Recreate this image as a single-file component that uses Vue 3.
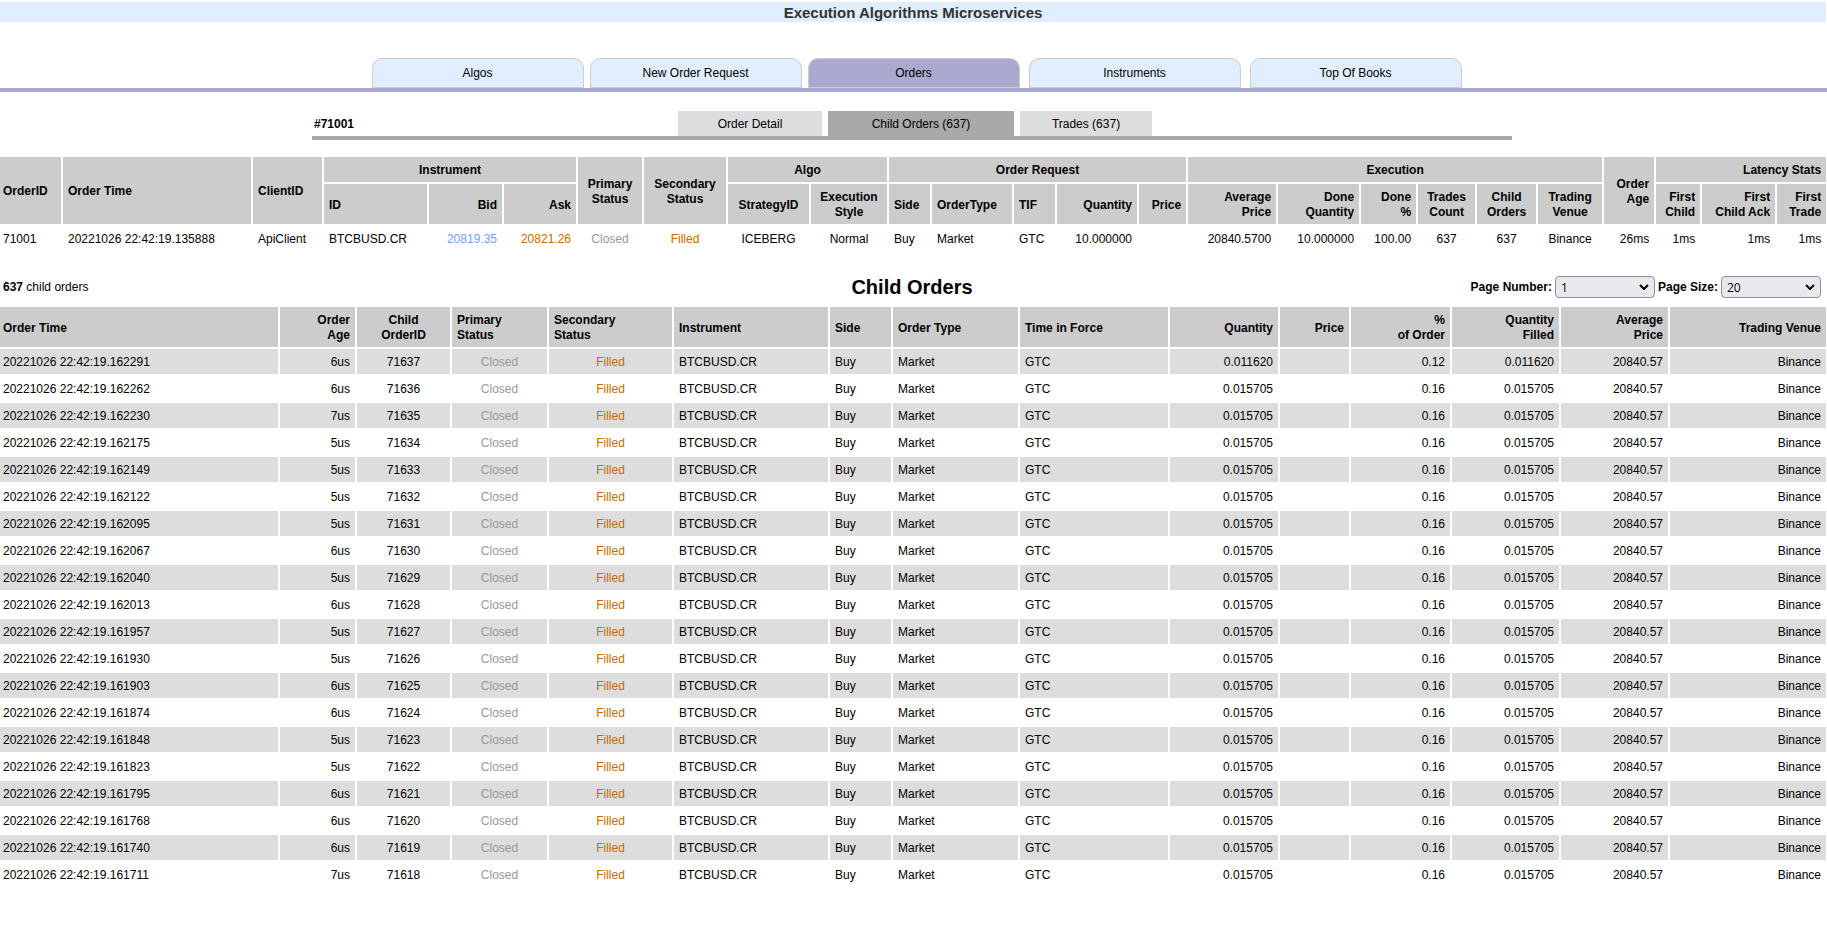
<script setup>
import { ref } from 'vue'

const tabs = ['Algos', 'New Order Request', 'Orders', 'Instruments', 'Top Of Books']
const activeTab = ref('Orders')

const views = [
  { id: 'detail', label: 'Order Detail' },
  { id: 'children', label: 'Child Orders (637)' },
  { id: 'trades', label: 'Trades (637)' }
]
const activeView = ref('children')

const page = ref('1')
const pageSize = ref('20')

const orderCols = [63, 190, 71, 105, 75, 74, 66, 84, 83, 78, 43, 82, 43, 82, 49, 90, 83, 57, 59, 61, 66, 52, 46, 75, 49]
const childCols = [280, 77, 95, 97, 125, 156, 63, 127, 150, 110, 71, 101, 109, 109, 156]

const childHeads = [
  ['Order Time', ''],
  ['Order\nAge', 'right'],
  ['Child\nOrderID', 'center'],
  ['Primary\nStatus', ''],
  ['Secondary\nStatus', ''],
  ['Instrument', ''],
  ['Side', ''],
  ['Order Type', ''],
  ['Time in Force', ''],
  ['Quantity', 'right'],
  ['Price', 'right'],
  ['%\nof Order', 'right'],
  ['Quantity\nFilled', 'right'],
  ['Average\nPrice', 'right'],
  ['Trading Venue', 'right']
]

const source = [
  ['162291', 6], ['162262', 6], ['162230', 7], ['162175', 5], ['162149', 5],
  ['162122', 5], ['162095', 5], ['162067', 6], ['162040', 5], ['162013', 6],
  ['161957', 5], ['161930', 5], ['161903', 6], ['161874', 6], ['161848', 5],
  ['161823', 5], ['161795', 6], ['161768', 6], ['161740', 6], ['161711', 7]
]
const children = source.map(([micros, age], i) => ({
  id: 71637 - i,
  time: '20221026 22:42:19.' + micros,
  age: age + 'us',
  quantity: i === 0 ? '0.011620' : '0.015705',
  share: i === 0 ? '0.12' : '0.16'
}))
</script>

<template>
  <div class="page">
    <h1 class="title">Execution Algorithms Microservices</h1>

    <nav class="tabs">
      <button
        v-for="t in tabs"
        :key="t"
        type="button"
        class="tab"
        :class="{ active: t === activeTab }"
        @click="activeTab = t"
      >{{ t }}</button>
    </nav>

    <div class="subnav-row">
      <div class="subnav">
        <strong class="order-no">#71001</strong>
        <div class="views">
          <button
            v-for="v in views"
            :key="v.id"
            type="button"
            class="view"
            :class="[v.id, { active: v.id === activeView }]"
            @click="activeView = v.id"
          >{{ v.label }}</button>
        </div>
      </div>
    </div>

    <main class="content">
      <table class="grid">
        <colgroup>
          <col v-for="(w, i) in orderCols" :key="i" :style="{ width: w + 'px' }">
        </colgroup>
        <thead>
          <tr>
            <th rowspan="2">OrderID</th>
            <th rowspan="2">Order Time</th>
            <th rowspan="2">ClientID</th>
            <th colspan="3" class="center">Instrument</th>
            <th rowspan="2" class="center">Primary<br>Status</th>
            <th rowspan="2" class="center">Secondary<br>Status</th>
            <th colspan="2" class="center">Algo</th>
            <th colspan="5" class="center">Order Request</th>
            <th colspan="6" class="center">Execution</th>
            <th rowspan="2" class="right">Order<br>Age</th>
            <th colspan="3" class="right last">Latency Stats</th>
          </tr>
          <tr>
            <th class="inner">ID</th>
            <th class="right">Bid</th>
            <th class="right">Ask</th>
            <th class="center">StrategyID</th>
            <th class="center">Execution<br>Style</th>
            <th>Side</th>
            <th>OrderType</th>
            <th>TIF</th>
            <th class="right">Quantity</th>
            <th class="right">Price</th>
            <th class="right">Average<br>Price</th>
            <th class="right">Done<br>Quantity</th>
            <th class="right">Done<br>%</th>
            <th class="center">Trades<br>Count</th>
            <th class="center">Child<br>Orders</th>
            <th class="center">Trading<br>Venue</th>
            <th class="right">First<br>Child</th>
            <th class="right">First<br>Child Ack</th>
            <th class="right last">First<br>Trade</th>
          </tr>
        </thead>
        <tbody>
          <tr class="plain">
            <td>71001</td>
            <td>20221026 22:42:19.135888</td>
            <td>ApiClient</td>
            <td>BTCBUSD.CR</td>
            <td class="right bid">20819.35</td>
            <td class="right ask">20821.26</td>
            <td class="center closed">Closed</td>
            <td class="center filled">Filled</td>
            <td class="center">ICEBERG</td>
            <td class="center">Normal</td>
            <td>Buy</td>
            <td>Market</td>
            <td>GTC</td>
            <td class="right">10.000000</td>
            <td></td>
            <td class="right">20840.5700</td>
            <td class="right">10.000000</td>
            <td class="right">100.00</td>
            <td class="center">637</td>
            <td class="center">637</td>
            <td class="center">Binance</td>
            <td class="right">26ms</td>
            <td class="right">1ms</td>
            <td class="right">1ms</td>
            <td class="right last">1ms</td>
          </tr>
        </tbody>
      </table>

      <div class="bar">
        <span><strong>637</strong> child orders</span>
        <h2>Child Orders</h2>
        <div class="pager">
          <label for="page-number">Page Number:</label>
          <span class="pick">
            <select id="page-number" v-model="page">
              <option>1</option>
              <option>2</option>
              <option>3</option>
            </select>
            <svg viewBox="0 0 10 6" aria-hidden="true"><path d="M1 1l4 4 4-4" /></svg>
          </span>
          <label for="page-size">Page Size:</label>
          <span class="pick">
            <select id="page-size" v-model="pageSize">
              <option>20</option>
              <option>50</option>
              <option>100</option>
            </select>
            <svg viewBox="0 0 10 6" aria-hidden="true"><path d="M1 1l4 4 4-4" /></svg>
          </span>
        </div>
      </div>

      <table class="grid">
        <colgroup>
          <col v-for="(w, i) in childCols" :key="i" :style="{ width: w + 'px' }">
        </colgroup>
        <thead>
          <tr>
            <th
              v-for="([label, align], i) in childHeads"
              :key="label"
              :class="[align, { last: i === childHeads.length - 1 }]"
            >{{ label }}</th>
          </tr>
        </thead>
        <tbody>
          <tr v-for="c in children" :key="c.id">
            <td>{{ c.time }}</td>
            <td class="right">{{ c.age }}</td>
            <td class="center">{{ c.id }}</td>
            <td class="center closed">Closed</td>
            <td class="center filled">Filled</td>
            <td>BTCBUSD.CR</td>
            <td>Buy</td>
            <td>Market</td>
            <td>GTC</td>
            <td class="right">{{ c.quantity }}</td>
            <td></td>
            <td class="right">{{ c.share }}</td>
            <td class="right">{{ c.quantity }}</td>
            <td class="right">20840.57</td>
            <td class="right last">Binance</td>
          </tr>
        </tbody>
      </table>
    </main>
  </div>
</template>

<style>
body {
  background: #fff;
}
</style>

<style scoped>
.page {
  padding-top: 2px;
  color: #000;
  font: 12px/15px "Liberation Sans", Arial, sans-serif;
}
.title {
  margin: 0;
  padding-top: 2px;
  margin-right: 1px;
  background: #e0eeff;
  color: #333;
  font-size: 15px;
  line-height: 18px;
  text-align: center;
}
.tabs {
  display: flex;
  justify-content: center;
  gap: 6px;
  margin-top: 36px;
  padding-left: 6px;
  border-bottom: 4px solid #aaaad0;
}
button {
  margin: 0;
  color: #000;
  font: inherit;
  cursor: pointer;
}
.tab {
  flex: 0 1 212px;
  height: 30px;
  padding: 0;
  border: 1px solid #ccc;
  border-radius: 10px 10px 0 0;
  background: #e0eeff;
}
.tab:nth-child(n + 4) {
  margin-left: 3px;
}
.tab.active {
  background: #aaaad0;
}
.subnav-row {
  margin-top: 19px;
  padding-right: 3px;
}
.subnav {
  display: grid;
  grid-template-columns: 366px 1fr;
  align-items: center;
  box-sizing: border-box;
  max-width: 1200px;
  margin: 0 auto;
  border-bottom: 4px solid #a9a9a9;
}
.order-no {
  padding-top: 2px;
  padding-left: 2px;
}
.views {
  display: flex;
  gap: 6px;
}
.view {
  height: 25px;
  padding: 2px 0 0;
  border: 0;
  background: #ddd;
}
.view.active {
  background: #a9a9a9;
}
.detail {
  width: 144px;
}
.children {
  width: 186px;
}
.trades {
  width: 132px;
}
.content {
  padding: 17px 1px 0 0;
}
.grid {
  width: 100%;
  table-layout: fixed;
  border-spacing: 0;
}
th,
td {
  padding: 6px 5px 4px;
  border-right: 2px solid #fff;
  border-bottom: 2px solid #fff;
  text-align: left;
  white-space: pre;
}
th {
  background: #ccc;
}
th:first-child:not(.inner),
td:first-child {
  padding-left: 3px;
}
tbody tr:nth-child(odd):not(.plain) td {
  background: #ddd;
}
.last {
  border-right: 0;
}
.center {
  text-align: center;
}
.right {
  text-align: right;
}
.bid {
  color: #6f9fff;
}
.ask,
.filled {
  color: #c76b00;
}
.closed {
  color: #999;
}
.bar {
  display: grid;
  grid-template-columns: 1fr auto 1fr;
  align-items: center;
  height: 32px;
  margin: 18px 0 4px;
  padding: 0 5px 0 3px;
}
h2 {
  margin: 0;
  font-size: 20px;
  line-height: 24px;
}
.pager {
  display: flex;
  align-items: center;
  justify-content: flex-end;
  gap: 3px;
  font-weight: bold;
}
.pick {
  position: relative;
  display: flex;
}
select {
  width: 100px;
  height: 22px;
  padding: 0 5px;
  appearance: none;
  border: 1px solid #8f8f9d;
  border-radius: 4px;
  background: #e9e9ed;
  color: #000;
  font: 12px "Open Sans", sans-serif;
}
.pick svg {
  position: absolute;
  top: 8px;
  right: 6px;
  width: 10px;
  height: 6px;
  fill: none;
  stroke: #000;
  stroke-width: 2;
  pointer-events: none;
}
</style>
